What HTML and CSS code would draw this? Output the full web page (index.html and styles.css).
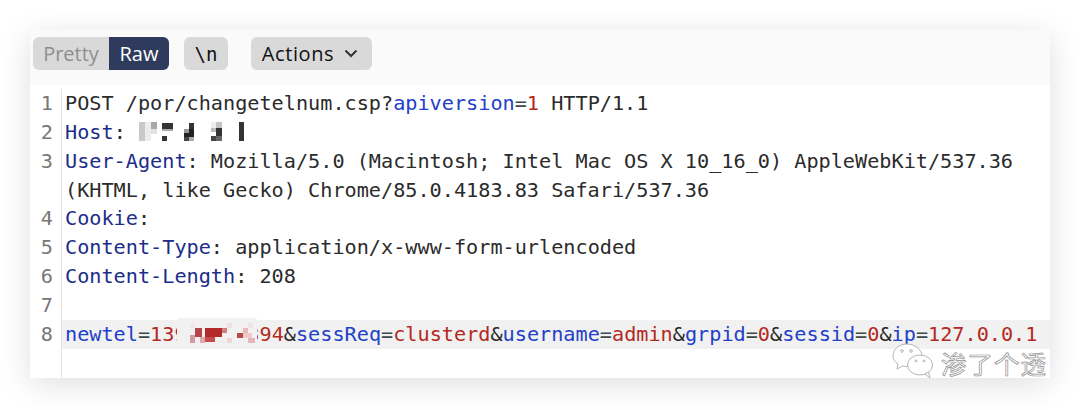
FILE: index.html
```html
<!DOCTYPE html>
<html lang="en">
<head>
<meta charset="utf-8">
<title>Request</title>
<link rel="stylesheet" href="styles.css">
</head>
<body>
<main class="panel">
  <div class="toolbar">
    <div class="seg"><span class="seg-item">Pretty</span><span class="seg-item active">Raw</span></div>
    <button class="btn btn-n">\n</button>
    <button class="btn btn-actions"><span class="label">Actions</span>
      <svg class="chev" width="14" height="9" viewBox="0 0 14 9"><path d="M1.5 1.5 7 7l5.500-5.500" fill="none" stroke="#333" stroke-width="2"/></svg>
    </button>
  </div>
  <div class="editor">
    <div class="line"><span class="no">1</span><span class="code">POST /por/changetelnum.csp?<b class="k">apiversion</b><i class="e">=</i><b class="v">1</b> HTTP/1.1</span></div>
    <div class="line"><span class="no">2</span><span class="code"><b class="h">Host</b>: <svg class="mosaic-host" width="106" height="21" viewBox="140 118 106 21">
      <rect x="140" y="119" width="6" height="19" fill="#c9c9c9"/><rect x="146" y="119" width="6" height="19" fill="#ececec"/>
      <rect x="152" y="119" width="6" height="7" fill="#a8a8a8"/><rect x="152" y="126" width="6" height="5" fill="#e2e2e2"/>
      <rect x="163" y="120" width="11" height="6" fill="#333"/><rect x="163" y="126" width="11" height="2" fill="#aaa"/><rect x="163" y="133" width="5" height="5" fill="#333"/>
      <rect x="190" y="120" width="5" height="6" fill="#333"/><rect x="190" y="126" width="5" height="5" fill="#222"/><rect x="185" y="126" width="5" height="4" fill="#999"/><rect x="185" y="130" width="10" height="4" fill="#222"/><rect x="185" y="134" width="5" height="4" fill="#444"/><rect x="190" y="134" width="5" height="4" fill="#aaa"/>
      <rect x="212" y="119" width="5" height="6" fill="#eee"/><rect x="217" y="119" width="6" height="6" fill="#c4c4c4"/><rect x="217" y="125" width="6" height="8" fill="#333"/><rect x="212" y="125" width="5" height="4" fill="#bbb"/><rect x="212" y="133" width="5" height="5" fill="#444"/><rect x="217" y="133" width="6" height="5" fill="#666"/>
      <rect x="240" y="119" width="5" height="19" fill="#333"/>
    </svg></span></div>
    <div class="line"><span class="no">3</span><span class="code"><span class="row"><b class="h">User-Agent</b>: Mozilla/5.0 (Macintosh; Intel Mac OS X 10_16_0) AppleWebKit/537.36</span><span class="row">(KHTML, like Gecko) Chrome/85.0.4183.83 Safari/537.36</span></span></div>
    <div class="line"><span class="no">4</span><span class="code"><b class="h">Cookie</b>:</span></div>
    <div class="line"><span class="no">5</span><span class="code"><b class="h">Content-Type</b>: application/x-www-form-urlencoded</span></div>
    <div class="line"><span class="no">6</span><span class="code"><b class="h">Content-Length</b>: 208</span></div>
    <div class="line"><span class="no">7</span><span class="code"> </span></div>
    <div class="line current"><span class="no">8</span><span class="code"><b class="k">newtel</b><i class="e">=</i><b class="v">139<span class="blurred">xxxxx</span>394</b>&amp;<b class="k">sessReq</b><i class="e">=</i><b class="v">clusterd</b>&amp;<b class="k">username</b><i class="e">=</i><b class="v">admin</b>&amp;<b class="k">grpid</b><i class="e">=</i><b class="v">0</b>&amp;<b class="k">sessid</b><i class="e">=</i><b class="v">0</b>&amp;<b class="k">ip</b><i class="e">=</i><b class="v">127.0.0.1</b></span></div>
    <div class="filler"></div>
    <svg class="mosaic-tel" width="80" height="30" viewBox="177 318 80 30">
      <rect x="177" y="318" width="80" height="30" rx="3" fill="#f1f1f1"/>
      <rect x="195" y="328" width="7" height="9" fill="#b5474a"/>
      <rect x="190" y="335" width="5" height="8" fill="#d59a9c"/><rect x="200" y="337" width="5" height="6" fill="#e0a8aa"/>
      <rect x="190" y="323" width="5" height="5" fill="#f4e6e6"/>
      <rect x="205" y="328" width="17" height="9" fill="#b32a2a"/><rect x="222" y="328" width="5" height="5" fill="#cf7f7f"/><rect x="205" y="337" width="10" height="5" fill="#c44d4d"/>
      <rect x="227" y="323" width="5" height="5" fill="#f0e0e0"/><rect x="227" y="338" width="5" height="5" fill="#ecd6d6"/>
      <rect x="237" y="333" width="6" height="5" fill="#b54a4a"/><rect x="243" y="328" width="5" height="5" fill="#eab8b8"/>
      <rect x="248" y="323" width="5" height="5" fill="#f2e3e3"/><rect x="248" y="338" width="7" height="5" fill="#e3b8b8"/><rect x="243" y="333" width="9" height="5" fill="#f0caca"/>
    </svg>
  </div>
  <div class="watermark">
    <svg class="wechat" width="42" height="36" viewBox="0 0 42 36" fill="#fff" stroke="#b4b4b4" stroke-width="1">
      <path d="M15 1C7 1 1 6.500 1 13c0 3.500 2 6 5 8l-1 5 5.500-3c2 .5 3 .6 4.500.6 8 0 15-4.600 15-10.600S23 1 15 1z"/>
      <ellipse cx="28" cy="22" rx="12.500" ry="10"/><path d="M33 31 38 35l-1.500-6z"/>
      <circle cx="10" cy="8" r="1.300"/><circle cx="19" cy="8" r="1.300"/><circle cx="24" cy="18" r="1"/><circle cx="32" cy="18" r="1"/>
    </svg>
    <span class="wm-text">渗了个透</span>
  </div>
</main>
</body>
</html>
```
FILE: styles.css
```css
* { box-sizing: border-box; }
html, body { margin: 0; height: 410px; background: #fff; overflow: hidden; }
body { padding: 30px; }
.panel {
  position: relative;
  width: 1020px;
  height: 348px;
  background: #fff;
  box-shadow: 0 6px 30px rgba(0, 0, 0, .13);
  display: flex;
  flex-direction: column;
}
.toolbar {
  height: 55px;
  flex: none;
  display: flex;
  align-items: flex-start;
  padding: 7px 0 0 3px;
  background: #fafafa;
  font-family: "Open Sans", "Liberation Sans", sans-serif;
  font-size: 20px;
}
.seg {
  display: flex;
  height: 33px;
  background: #d9d9d9;
  border-radius: 6px;
  overflow: hidden;
}
.seg-item {
  display: flex;
  align-items: center;
  justify-content: center;
  width: 76px;
  color: #8f8f8f;
}
.seg-item.active { width: 60px; background: #2f3b5c; color: #fff; }
.btn {
  height: 33px;
  border: 0;
  padding: 0;
  border-radius: 6px;
  background: #d9d9d9;
  color: #111;
  font: inherit;
  display: flex;
  align-items: center;
  justify-content: center;
}
.btn-n { width: 44px; margin-left: 15px; font-family: "DejaVu Sans Mono", monospace; font-size: 19px; }
.btn-actions { width: 121px; margin-left: 23px; padding-right: 3px; gap: 10px; }
.label { letter-spacing: .6px; }
.editor {
  position: relative;
  flex: 1;
  display: flex;
  flex-direction: column;
  padding-top: 4px;
  font-family: "DejaVu Sans Mono", "Liberation Mono", monospace;
  font-size: 20.200px;
  line-height: 28.850px;
  color: #2b2b2b;
}
.line { display: flex; }
.no {
  width: 32px;
  flex: none;
  padding-right: 8px;
  text-align: right;
  color: #777;
  border-right: 1px solid #e4e4e4;
}
.code { padding-left: 3px; white-space: pre; }
.row { display: block; }
.code b, .code i { font-weight: normal; font-style: normal; }
.k { color: #2340c8; }
.h { color: #1c2d8a; }
.v { color: #b32a22; }
.e { color: #3c4a4a; }
.blurred { visibility: hidden; }
.current .code { flex: 1; background: #f1f1f1; }
.filler { flex: 1; width: 32px; border-right: 1px solid #e4e4e4; }
.mosaic-host { vertical-align: -3px; margin-left: 1px; }
.mosaic-tel { position: absolute; left: 147px; top: 233px; }
.watermark {
  position: absolute;
  right: 0;
  top: 318px;
  width: 158px;
  height: 30px;
  display: flex;
  align-items: center;
  opacity: .99;
}
.wechat { position: absolute; left: 0; top: -5px; }
.wm-text {
  margin-left: 49px;
  font-family: "Noto Sans CJK SC", sans-serif;
  font-size: 25.500px;
  line-height: 26px;
  letter-spacing: 1px;
  color: #fff;
  -webkit-text-stroke: .7px #8f8f8f;
}
```
